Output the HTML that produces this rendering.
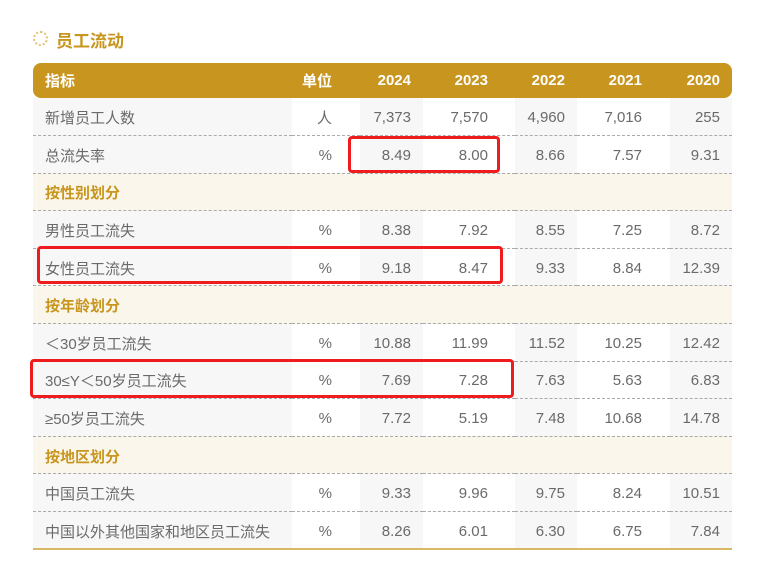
<!DOCTYPE html>
<html><head><meta charset="utf-8"><style>
html,body{margin:0;padding:0;background:#fff;width:773px;height:582px;overflow:hidden;position:relative;font-family:"Liberation Sans","Noto Sans CJK SC",sans-serif;}
.title{position:absolute;left:56px;top:27px;font-size:17px;font-weight:bold;color:#c8961e;}
.ic{position:absolute;left:33px;top:31px;width:11px;height:11px;border:2px dotted #e0c274;border-radius:50%;}
table{position:absolute;left:33px;top:63px;border-collapse:collapse;table-layout:fixed;width:699px;font-size:15px;color:#6a6a6a;}
td{height:37.6px;padding:0;padding-top:2px;text-align:right;border-bottom:1px dashed #aaa;box-sizing:border-box;}
tr.h td{height:35px;background:#c8961e !important;color:#fff;font-weight:bold;border:none;padding-top:0;}
tr.h td:first-child{border-radius:8px 0 0 8px}
tr.h td:last-child{border-radius:0 8px 8px 0}
td.l{text-align:left;padding-left:12px;background:#f7f7f7}
.c1{padding-right:28px;background:#fff}
.c2{padding-right:12px;background:#f7f7f7}
.c3{padding-right:27px;background:#fff}
.c4{padding-right:12px;background:#f7f7f7}
.c5{padding-right:28px;background:#fff}
.c6{padding-right:12px;background:#f7f7f7}
tr.s td{background:#fbf6ec;color:#c8961e;font-weight:bold;text-align:left;padding-left:12px}
tr.last td{border-bottom:2px solid #d9b866}
.box{position:absolute;border:3px solid #ee1c1c;border-radius:4px;box-sizing:border-box;}
</style></head><body>
<div class="ic"></div><div class="title">员工流动</div>
<table>
<colgroup><col style="width:259px"><col style="width:68px"><col style="width:63px"><col style="width:92px"><col style="width:62px"><col style="width:93px"><col style="width:62px"></colgroup>
<tr class="h"><td class="l">指标</td><td class="c1">单位</td><td class="c2">2024</td><td class="c3">2023</td><td class="c4">2022</td><td class="c5">2021</td><td class="c6">2020</td></tr>
<tr><td class="l">新增员工人数</td><td class="c1">人</td><td class="c2">7,373</td><td class="c3">7,570</td><td class="c4">4,960</td><td class="c5">7,016</td><td class="c6">255</td></tr>
<tr><td class="l">总流失率</td><td class="c1">%</td><td class="c2">8.49</td><td class="c3">8.00</td><td class="c4">8.66</td><td class="c5">7.57</td><td class="c6">9.31</td></tr>
<tr class="s"><td colspan="7">按性别划分</td></tr>
<tr><td class="l">男性员工流失</td><td class="c1">%</td><td class="c2">8.38</td><td class="c3">7.92</td><td class="c4">8.55</td><td class="c5">7.25</td><td class="c6">8.72</td></tr>
<tr><td class="l">女性员工流失</td><td class="c1">%</td><td class="c2">9.18</td><td class="c3">8.47</td><td class="c4">9.33</td><td class="c5">8.84</td><td class="c6">12.39</td></tr>
<tr class="s"><td colspan="7">按年龄划分</td></tr>
<tr><td class="l">＜30岁员工流失</td><td class="c1">%</td><td class="c2">10.88</td><td class="c3">11.99</td><td class="c4">11.52</td><td class="c5">10.25</td><td class="c6">12.42</td></tr>
<tr><td class="l">30≤Y＜50岁员工流失</td><td class="c1">%</td><td class="c2">7.69</td><td class="c3">7.28</td><td class="c4">7.63</td><td class="c5">5.63</td><td class="c6">6.83</td></tr>
<tr><td class="l">≥50岁员工流失</td><td class="c1">%</td><td class="c2">7.72</td><td class="c3">5.19</td><td class="c4">7.48</td><td class="c5">10.68</td><td class="c6">14.78</td></tr>
<tr class="s"><td colspan="7">按地区划分</td></tr>
<tr><td class="l">中国员工流失</td><td class="c1">%</td><td class="c2">9.33</td><td class="c3">9.96</td><td class="c4">9.75</td><td class="c5">8.24</td><td class="c6">10.51</td></tr>
<tr class="last"><td class="l">中国以外其他国家和地区员工流失</td><td class="c1">%</td><td class="c2">8.26</td><td class="c3">6.01</td><td class="c4">6.30</td><td class="c5">6.75</td><td class="c6">7.84</td></tr>
</table>
<div class="box" style="left:348px;top:136px;width:152px;height:37px"></div>
<div class="box" style="left:37px;top:246px;width:466px;height:38px"></div>
<div class="box" style="left:30px;top:359px;width:484px;height:39px"></div>
</body></html>
